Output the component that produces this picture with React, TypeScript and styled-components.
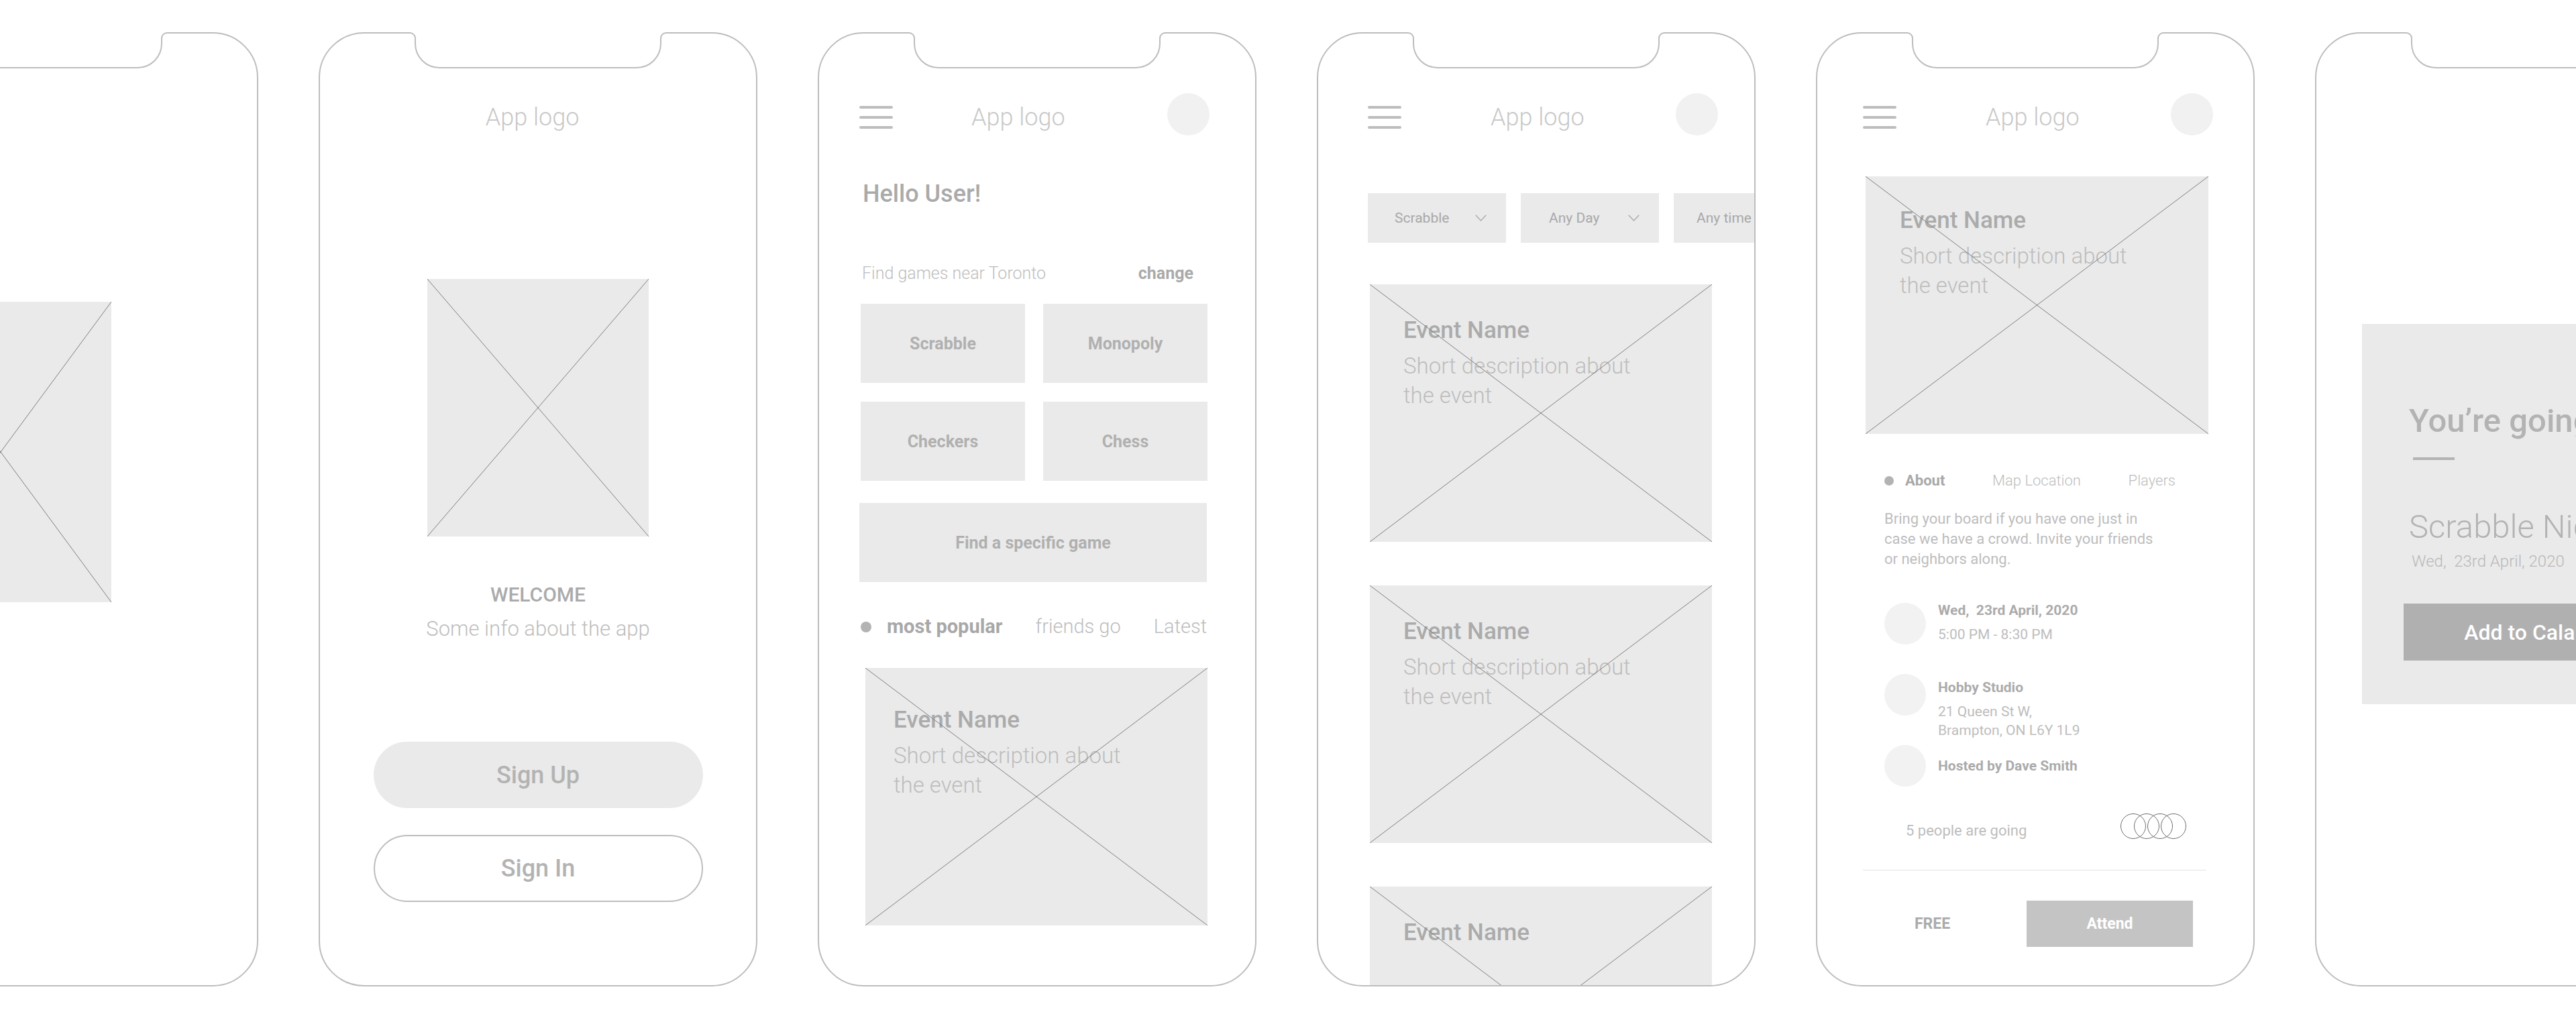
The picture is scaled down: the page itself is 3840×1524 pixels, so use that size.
import React from 'react';
import styled, { createGlobalStyle } from 'styled-components';

const GlobalStyle = createGlobalStyle`
  html, body {
    margin: 0;
    padding: 0;
    background: #fff;
    overflow: hidden;
  }
  body {
    font-family: Roboto, 'Liberation Sans', Arial, sans-serif;
  }
  #root {
    width: 3840px;
    height: 1524px;
    overflow: hidden;
  }
`;

const Canvas = styled.div`
  display: flex;
  gap: 90px;
  margin-left: -269px;
  padding-top: 48px;
`;

const Device = styled.div`
  position: relative;
  flex: none;
  width: 654px;
  min-width: 0;
  height: 1423px;
`;

const Screen = styled.div`
  box-sizing: border-box;
  width: 654px;
  height: 100%;
  border: 2px solid #bdbdbd;
  border-radius: 68px;
  overflow: hidden;
  background: #fff;
  display: flex;
  flex-direction: column;
`;

const NotchSvg = styled.svg`
  position: absolute;
  top: 0;
  left: 0;
  width: 654px;
  height: 60px;
  pointer-events: none;
`;

const notchLine =
  'M 128 1 H 136 A 8 8 0 0 1 144 9 V 17 A 36 36 0 0 0 180 53 H 474 A 36 36 0 0 0 510 17 V 9 A 8 8 0 0 1 518 1 H 526';

const Notch = () => (
  <NotchSvg viewBox="0 0 654 60">
    <path d={`${notchLine} V -1 H 128 Z`} fill="#fff" />
    <path d={notchLine} fill="none" stroke="#bdbdbd" strokeWidth="2" />
  </NotchSvg>
);

const Phone: React.FC<{ children?: React.ReactNode }> = ({ children }) => (
  <Device>
    <Screen>{children}</Screen>
    <Notch />
  </Device>
);

/* placeholders */
const ImageBox = styled.div<{ $w: number; $h: number; $pt?: number; $pl?: number }>`
  position: relative;
  flex-shrink: 0;
  box-sizing: border-box;
  width: ${(p) => p.$w}px;
  height: ${(p) => p.$h}px;
  padding: ${(p) => p.$pt || 0}px 0 0 ${(p) => p.$pl || 0}px;
  background: #eaeaea;
`;

const CrossSvg = styled.svg`
  position: absolute;
  inset: 0;
  width: 100%;
  height: 100%;
  stroke: #7f7f7f;
  stroke-width: 1;
  pointer-events: none;
`;

const Cross = () => (
  <CrossSvg viewBox="0 0 100 100" preserveAspectRatio="none">
    <line x1="0" y1="0" x2="100" y2="100" vectorEffect="non-scaling-stroke" />
    <line x1="100" y1="0" x2="0" y2="100" vectorEffect="non-scaling-stroke" />
  </CrossSvg>
);

const EventName = styled.div`
  font-size: 35px;
  font-weight: 500;
  line-height: 1;
  color: #ababab;
  white-space: nowrap;
`;

const EventDesc = styled.div`
  margin-top: 14px;
  font-size: 33px;
  font-weight: 300;
  line-height: 44px;
  color: #bdbdbd;
  white-space: nowrap;
`;

interface EventCardProps {
  pt: number;
  pl: number;
  w?: number;
  short?: boolean;
}

const EventCard: React.FC<EventCardProps> = ({ pt, pl, w = 510, short }) => (
  <ImageBox $w={w} $h={384} $pt={pt} $pl={pl}>
    <EventName>Event Name</EventName>
    {!short && (
      <EventDesc>
        Short description about
        <br />
        the event
      </EventDesc>
    )}
    <Cross />
  </ImageBox>
);

/* header */
const Header = styled.div<{ $left: number; $gap: number; $right: number }>`
  display: flex;
  align-items: center;
  height: 36px;
  margin-top: 107px;
  padding: 0 ${(p) => p.$right}px 0 ${(p) => p.$left}px;
  & > :nth-child(2) {
    margin-left: ${(p) => p.$gap}px;
  }
`;

const Burger = styled.div`
  display: flex;
  flex-direction: column;
  justify-content: space-between;
  width: 50px;
  height: 34px;
  span {
    display: block;
    height: 4px;
    border-radius: 2px;
    background: #bdbdbd;
  }
`;

const Logo = styled.div`
  font-size: 36px;
  font-weight: 300;
  line-height: 1;
  color: #c8c8c8;
  white-space: nowrap;
`;

const Avatar = styled.div`
  width: 63px;
  height: 63px;
  margin: -9px 0 0 auto;
  border-radius: 50%;
  background: #f1f1f1;
`;

const AppHeader: React.FC<{ left: number; gap: number; right: number }> = ({ left, gap, right }) => (
  <Header $left={left} $gap={gap} $right={right}>
    <Burger>
      <span />
      <span />
      <span />
    </Burger>
    <Logo>App logo</Logo>
    <Avatar />
  </Header>
);

/* welcome screen */
const Welcome = styled.div`
  display: flex;
  flex-direction: column;
  align-items: center;
`;

const WelcomeLogo = styled(Logo)`
  margin: 107px 17px 0 0;
`;

const WelcomeTitle = styled.div`
  margin-top: 72px;
  font-size: 30px;
  font-weight: 500;
  line-height: 1;
  color: #ababab;
`;

const WelcomeInfo = styled.div`
  margin-top: 20px;
  font-size: 31px;
  font-weight: 300;
  line-height: 1;
  color: #bdbdbd;
`;

const Pill = styled.div<{ $outline?: boolean; $mt: number }>`
  box-sizing: border-box;
  display: flex;
  align-items: center;
  justify-content: center;
  width: 491px;
  height: ${(p) => (p.$outline ? 100 : 99)}px;
  margin-top: ${(p) => p.$mt}px;
  border-radius: 50px;
  border: ${(p) => (p.$outline ? '2px solid #bdbdbd' : 'none')};
  background: ${(p) => (p.$outline ? '#fff' : '#eaeaea')};
  font-size: 36px;
  font-weight: 500;
  color: #b3b3b3;
`;

/* home screen */
const Hello = styled.div`
  margin: 78px 0 0 65px;
  font-size: 36px;
  font-weight: 500;
  line-height: 1;
  color: #aaaaaa;
`;

const LocationRow = styled.div`
  display: flex;
  justify-content: space-between;
  margin-top: 88px;
  padding: 0 92px 0 64px;
  font-size: 25px;
  line-height: 1;
  white-space: nowrap;
`;

const LocationText = styled.span`
  font-weight: 300;
  color: #bdbdbd;
`;

const ChangeLink = styled.span`
  font-weight: 700;
  color: #aaaaaa;
`;

const GameGrid = styled.div`
  display: grid;
  grid-template-columns: 245px 245px;
  grid-auto-rows: 118px;
  gap: 28px 27px;
  margin: 33px 0 0 62px;
`;

const GameTile = styled.div<{ $w?: number; $h?: number }>`
  display: flex;
  align-items: center;
  justify-content: center;
  width: ${(p) => (p.$w ? `${p.$w}px` : 'auto')};
  height: ${(p) => (p.$h ? `${p.$h}px` : 'auto')};
  background: #eaeaea;
  font-size: 25px;
  font-weight: 700;
  color: #b0b0b0;
  white-space: nowrap;
`;

const WideTile = styled(GameTile)`
  margin: 33px 0 0 60px;
`;

const Tabs = styled.div<{ $ml: number; $w: number; $size: number; $mt: number }>`
  display: flex;
  align-items: center;
  justify-content: space-between;
  width: ${(p) => p.$w}px;
  margin: ${(p) => p.$mt}px 0 0 ${(p) => p.$ml}px;
  font-size: ${(p) => p.$size}px;
  line-height: 1;
  white-space: nowrap;
`;

const TabGroup = styled.div<{ $gap: number }>`
  display: flex;
  align-items: center;
  gap: ${(p) => p.$gap}px;
`;

const Dot = styled.span<{ $size: number }>`
  width: ${(p) => p.$size}px;
  height: ${(p) => p.$size}px;
  border-radius: 50%;
  background: #b3b3b3;
`;

const Tab = styled.span<{ $active?: boolean }>`
  font-weight: ${(p) => (p.$active ? 700 : 300)};
  color: ${(p) => (p.$active ? '#a8a8a8' : '#bdbdbd')};
`;

const Slot = styled.div<{ $mt: number; $ml: number }>`
  margin: ${(p) => p.$mt}px 0 0 ${(p) => p.$ml}px;
`;

/* search screen */
const Filters = styled.div`
  display: flex;
  gap: 22px;
  margin: 95px 0 0 74px;
`;

const Filter = styled.div<{ $pl: number }>`
  flex: 0 0 206px;
  box-sizing: border-box;
  height: 74px;
  display: flex;
  align-items: center;
  justify-content: space-between;
  padding: 0 29px 0 ${(p) => p.$pl}px;
  background: #eaeaea;
  font-size: 21px;
  color: #a8a8a8;
  white-space: nowrap;
`;

const Chevron = () => (
  <svg width="17" height="10" viewBox="0 0 17 10">
    <polyline points="0.75,0.75 8.5,9 16.25,0.75" fill="none" stroke="#ababab" strokeWidth="1.4" />
  </svg>
);

const CardList = styled.div`
  display: flex;
  flex-direction: column;
  gap: 65px;
  margin: 62px 0 0 77px;
`;

/* detail screen */
const About = styled.div`
  margin: 31px 0 0 100px;
  font-size: 22px;
  line-height: 30px;
  color: #bdbdbd;
  white-space: nowrap;
`;

const InfoList = styled.div`
  display: grid;
  grid-auto-rows: 62px;
  row-gap: 44px;
  margin: 50px 0 0 100px;
`;

const InfoRow = styled.div<{ $top?: number }>`
  display: flex;
  align-items: ${(p) => (p.$top !== undefined ? 'flex-start' : 'center')};
  gap: 18px;
  & > div:last-child {
    padding-top: ${(p) => p.$top || 0}px;
  }
`;

const InfoIcon = styled.div`
  flex: 0 0 62px;
  height: 62px;
  border-radius: 50%;
  background: #f2f2f2;
`;

const InfoTitle = styled.div`
  font-size: 21px;
  font-weight: 700;
  line-height: 1;
  color: #ababab;
  white-space: nowrap;
`;

const InfoSub = styled.div`
  margin-top: 11px;
  font-size: 21px;
  line-height: 28px;
  color: #bdbdbd;
  white-space: nowrap;
`;

const GoingRow = styled.div`
  display: flex;
  align-items: flex-start;
  margin-top: 40px;
  padding: 0 100px 0 132px;
`;

const GoingText = styled.div`
  margin-top: 15px;
  font-size: 22px;
  line-height: 1;
  color: #bdbdbd;
`;

const Rings = styled.div`
  display: flex;
  margin-left: auto;
`;

const Ring = styled.span`
  box-sizing: border-box;
  width: 38px;
  height: 38px;
  border: 1px solid #6e6e6e;
  border-radius: 50%;
  & + & {
    margin-left: -18px;
  }
`;

const Divider = styled.div`
  width: 512px;
  height: 1px;
  margin: 46px 0 0 68px;
  background: #e4e4e4;
`;

const Footer = styled.div`
  display: flex;
  align-items: center;
  margin-top: 45px;
  padding: 0 90px 0 145px;
`;

const Price = styled.div`
  font-size: 23px;
  font-weight: 700;
  color: #ababab;
`;

const AttendButton = styled.div`
  display: flex;
  align-items: center;
  justify-content: center;
  width: 248px;
  height: 69px;
  margin-left: auto;
  background: #c4c4c4;
  font-size: 23px;
  font-weight: 700;
  color: #fff;
`;

/* confirmation screen */
const Confirm = styled.div`
  box-sizing: border-box;
  flex-shrink: 0;
  width: 514px;
  height: 567px;
  margin: 433px 0 0 68px;
  padding-left: 70px;
  background: #eaeaea;
  white-space: nowrap;
`;

const ConfirmTitle = styled.div`
  margin-top: 120px;
  font-size: 49px;
  font-weight: 500;
  line-height: 1;
  color: #b3b3b3;
`;

const ConfirmBar = styled.div`
  width: 62px;
  height: 4px;
  margin: 30px 0 0 6px;
  background: #b3b3b3;
`;

const ConfirmName = styled.div`
  margin-top: 75px;
  font-size: 49px;
  font-weight: 300;
  line-height: 1;
  color: #b3b3b3;
`;

const ConfirmDate = styled.div`
  margin: 15px 0 0 4px;
  font-size: 24px;
  font-weight: 300;
  line-height: 1;
  color: #b8b8b8;
`;

const CalendarButton = styled.div`
  display: flex;
  align-items: center;
  justify-content: center;
  width: 410px;
  height: 85px;
  margin: 51px 0 0 -8px;
  background: #b0b0b0;
  font-size: 32px;
  font-weight: 500;
  color: #fff;
`;

const App: React.FC = () => (
  <>
    <GlobalStyle />
    <Canvas>
      <Phone>
        <Slot $mt={400} $ml={103}>
          <ImageBox $w={330} $h={448}>
            <Cross />
          </ImageBox>
        </Slot>
      </Phone>

      <Phone>
        <Welcome>
          <WelcomeLogo>App logo</WelcomeLogo>
          <Slot $mt={223} $ml={0}>
            <ImageBox $w={330} $h={384}>
              <Cross />
            </ImageBox>
          </Slot>
          <WelcomeTitle>WELCOME</WelcomeTitle>
          <WelcomeInfo>Some info about the app</WelcomeInfo>
          <Pill $mt={153}>Sign Up</Pill>
          <Pill $mt={40} $outline>
            Sign In
          </Pill>
        </Welcome>
      </Phone>

      <Phone>
        <AppHeader left={60} gap={117} right={68} />
        <Hello>Hello User!</Hello>
        <LocationRow>
          <LocationText>Find games near Toronto</LocationText>
          <ChangeLink>change</ChangeLink>
        </LocationRow>
        <GameGrid>
          <GameTile>Scrabble</GameTile>
          <GameTile>Monopoly</GameTile>
          <GameTile>Checkers</GameTile>
          <GameTile>Chess</GameTile>
        </GameGrid>
        <WideTile $w={518} $h={118}>
          Find a specific game
        </WideTile>
        <Tabs $ml={62} $w={516} $size={29} $mt={52}>
          <TabGroup $gap={23}>
            <Dot $size={16} />
            <Tab $active>most popular</Tab>
          </TabGroup>
          <Tab>friends go</Tab>
          <Tab>Latest</Tab>
        </Tabs>
        <Slot $mt={47} $ml={69}>
          <EventCard pt={60} pl={42} />
        </Slot>
      </Phone>

      <Phone>
        <AppHeader left={74} gap={133} right={54} />
        <Filters>
          <Filter $pl={40}>
            Scrabble
            <Chevron />
          </Filter>
          <Filter $pl={42}>
            Any Day
            <Chevron />
          </Filter>
          <Filter $pl={34}>
            Any time
            <Chevron />
          </Filter>
        </Filters>
        <CardList>
          <EventCard pt={51} pl={50} />
          <EventCard pt={51} pl={50} />
          <EventCard pt={51} pl={50} short />
        </CardList>
      </Phone>

      <Phone>
        <AppHeader left={68} gap={133} right={60} />
        <Slot $mt={70} $ml={72}>
          <EventCard pt={48} pl={51} w={511} />
        </Slot>
        <Tabs $ml={100} $w={434} $size={22} $mt={59}>
          <TabGroup $gap={17}>
            <Dot $size={14} />
            <Tab $active>About</Tab>
          </TabGroup>
          <Tab>Map Location</Tab>
          <Tab>Players</Tab>
        </Tabs>
        <About>
          Bring your board if you have one just in
          <br />
          case we have a crowd. Invite your friends
          <br />
          or neighbors along.
        </About>
        <InfoList>
          <InfoRow>
            <InfoIcon />
            <div>
              <InfoTitle>Wed,&nbsp; 23rd April, 2020</InfoTitle>
              <InfoSub>5:00 PM - 8:30 PM</InfoSub>
            </div>
          </InfoRow>
          <InfoRow $top={10}>
            <InfoIcon />
            <div>
              <InfoTitle>Hobby Studio</InfoTitle>
              <InfoSub>
                21 Queen St W,
                <br />
                Brampton, ON L6Y 1L9
              </InfoSub>
            </div>
          </InfoRow>
          <InfoRow>
            <InfoIcon />
            <div>
              <InfoTitle>Hosted by Dave Smith</InfoTitle>
            </div>
          </InfoRow>
        </InfoList>
        <GoingRow>
          <GoingText>5 people are going</GoingText>
          <Rings>
            <Ring />
            <Ring />
            <Ring />
            <Ring />
          </Rings>
        </GoingRow>
        <Divider />
        <Footer>
          <Price>FREE</Price>
          <AttendButton>Attend</AttendButton>
        </Footer>
      </Phone>

      <Phone>
        <Confirm>
          <ConfirmTitle>You’re going!</ConfirmTitle>
          <ConfirmBar />
          <ConfirmName>Scrabble Night</ConfirmName>
          <ConfirmDate>Wed,&nbsp; 23rd April, 2020</ConfirmDate>
          <CalendarButton>Add to Calander</CalendarButton>
        </Confirm>
      </Phone>
    </Canvas>
  </>
);

export default App;
